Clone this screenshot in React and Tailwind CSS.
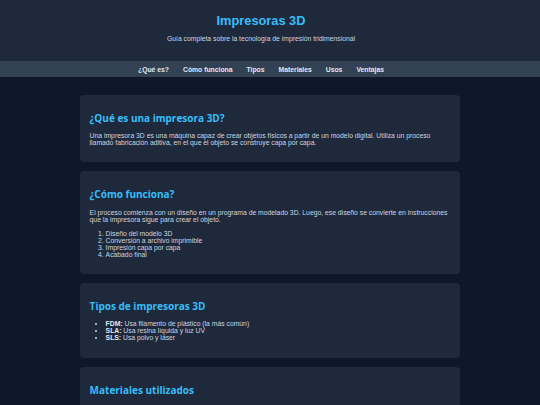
export default function App() {
  const links = ['¿Qué es?', 'Cómo funciona', 'Tipos', 'Materiales', 'Usos', 'Ventajas'];

  return (
    <div className="min-h-screen bg-[#0f172a] font-['Liberation_Sans',Arial,sans-serif] text-[6.8px] leading-[normal] text-[#cbd5e1]">
      <header className="bg-[#1e293b] pt-[13px] pb-[19.2px] pr-[18px] text-center">
        <h1 className="text-[12.8px] leading-[15px] font-bold text-[#38bdf8]">Impresoras 3D</h1>
        <p className="mt-[7px]">Guía completa sobre la tecnología de impresión tridimensional</p>
      </header>

      <nav className="bg-[#334155] h-[16px] flex items-center justify-center gap-[14px] pr-[18px]">
        {links.map((l) => (
          <a key={l} className="font-bold text-[#e2e8f0]">{l}</a>
        ))}
      </nav>

      <main className="pt-[18px] flex flex-col items-center gap-[9px] pb-4">
        <section className="w-[380px] bg-[#1e293b] rounded-[4px] px-[9.6px] pt-[16px] pb-[16px]">
          <h2 className="font-['Open_Sans',sans-serif] font-bold text-[10px] leading-[14px] text-[#38bdf8]">¿Qué es una impresora 3D?</h2>
          <p className="mt-[7.2px]">
            Una impresora 3D es una máquina capaz de crear objetos físicos a partir de un modelo digital. Utiliza un proceso llamado fabricación aditiva, en el que el objeto se construye capa por capa.
          </p>
        </section>

        <section className="w-[380px] bg-[#1e293b] rounded-[4px] px-[9.6px] pt-[16px] pb-[16.5px]">
          <h2 className="font-['Open_Sans',sans-serif] font-bold text-[10px] leading-[14px] text-[#38bdf8]">¿Cómo funciona?</h2>
          <p className="mt-[7.2px]">
            El proceso comienza con un diseño en un programa de modelado 3D. Luego, ese diseño se convierte en instrucciones que la impresora sigue para crear el objeto.
          </p>
          <ol className="mt-[7.2px] list-decimal pl-[16px]">
            <li>Diseño del modelo 3D</li>
            <li>Conversión a archivo imprimible</li>
            <li>Impresión capa por capa</li>
            <li>Acabado final</li>
          </ol>
        </section>

        <section className="w-[380px] bg-[#1e293b] rounded-[4px] px-[9.6px] pt-[16px] pb-[16.5px]">
          <h2 className="font-['Open_Sans',sans-serif] font-bold text-[10px] leading-[14px] text-[#38bdf8]">Tipos de impresoras 3D</h2>
          <ul className="mt-[7.2px] list-disc pl-[16px]">
            <li><strong className="text-[#e2e8f0]">FDM:</strong> Usa filamento de plástico (la más común)</li>
            <li><strong className="text-[#e2e8f0]">SLA:</strong> Usa resina líquida y luz UV</li>
            <li><strong className="text-[#e2e8f0]">SLS:</strong> Usa polvo y láser</li>
          </ul>
        </section>

        <section className="w-[380px] bg-[#1e293b] rounded-[4px] px-[9.6px] pt-[16px] pb-[16.5px]">
          <h2 className="font-['Open_Sans',sans-serif] font-bold text-[10px] leading-[14px] text-[#38bdf8]">Materiales utilizados</h2>
          <ul className="mt-[7.2px] list-disc pl-[16px]">
            <li><strong className="text-[#e2e8f0]">PLA:</strong> Biodegradable y fácil de usar</li>
            <li><strong className="text-[#e2e8f0]">ABS:</strong> Resistente y duradero</li>
            <li><strong className="text-[#e2e8f0]">PETG:</strong> Flexible y resistente</li>
          </ul>
        </section>
      </main>
    </div>
  );
}
